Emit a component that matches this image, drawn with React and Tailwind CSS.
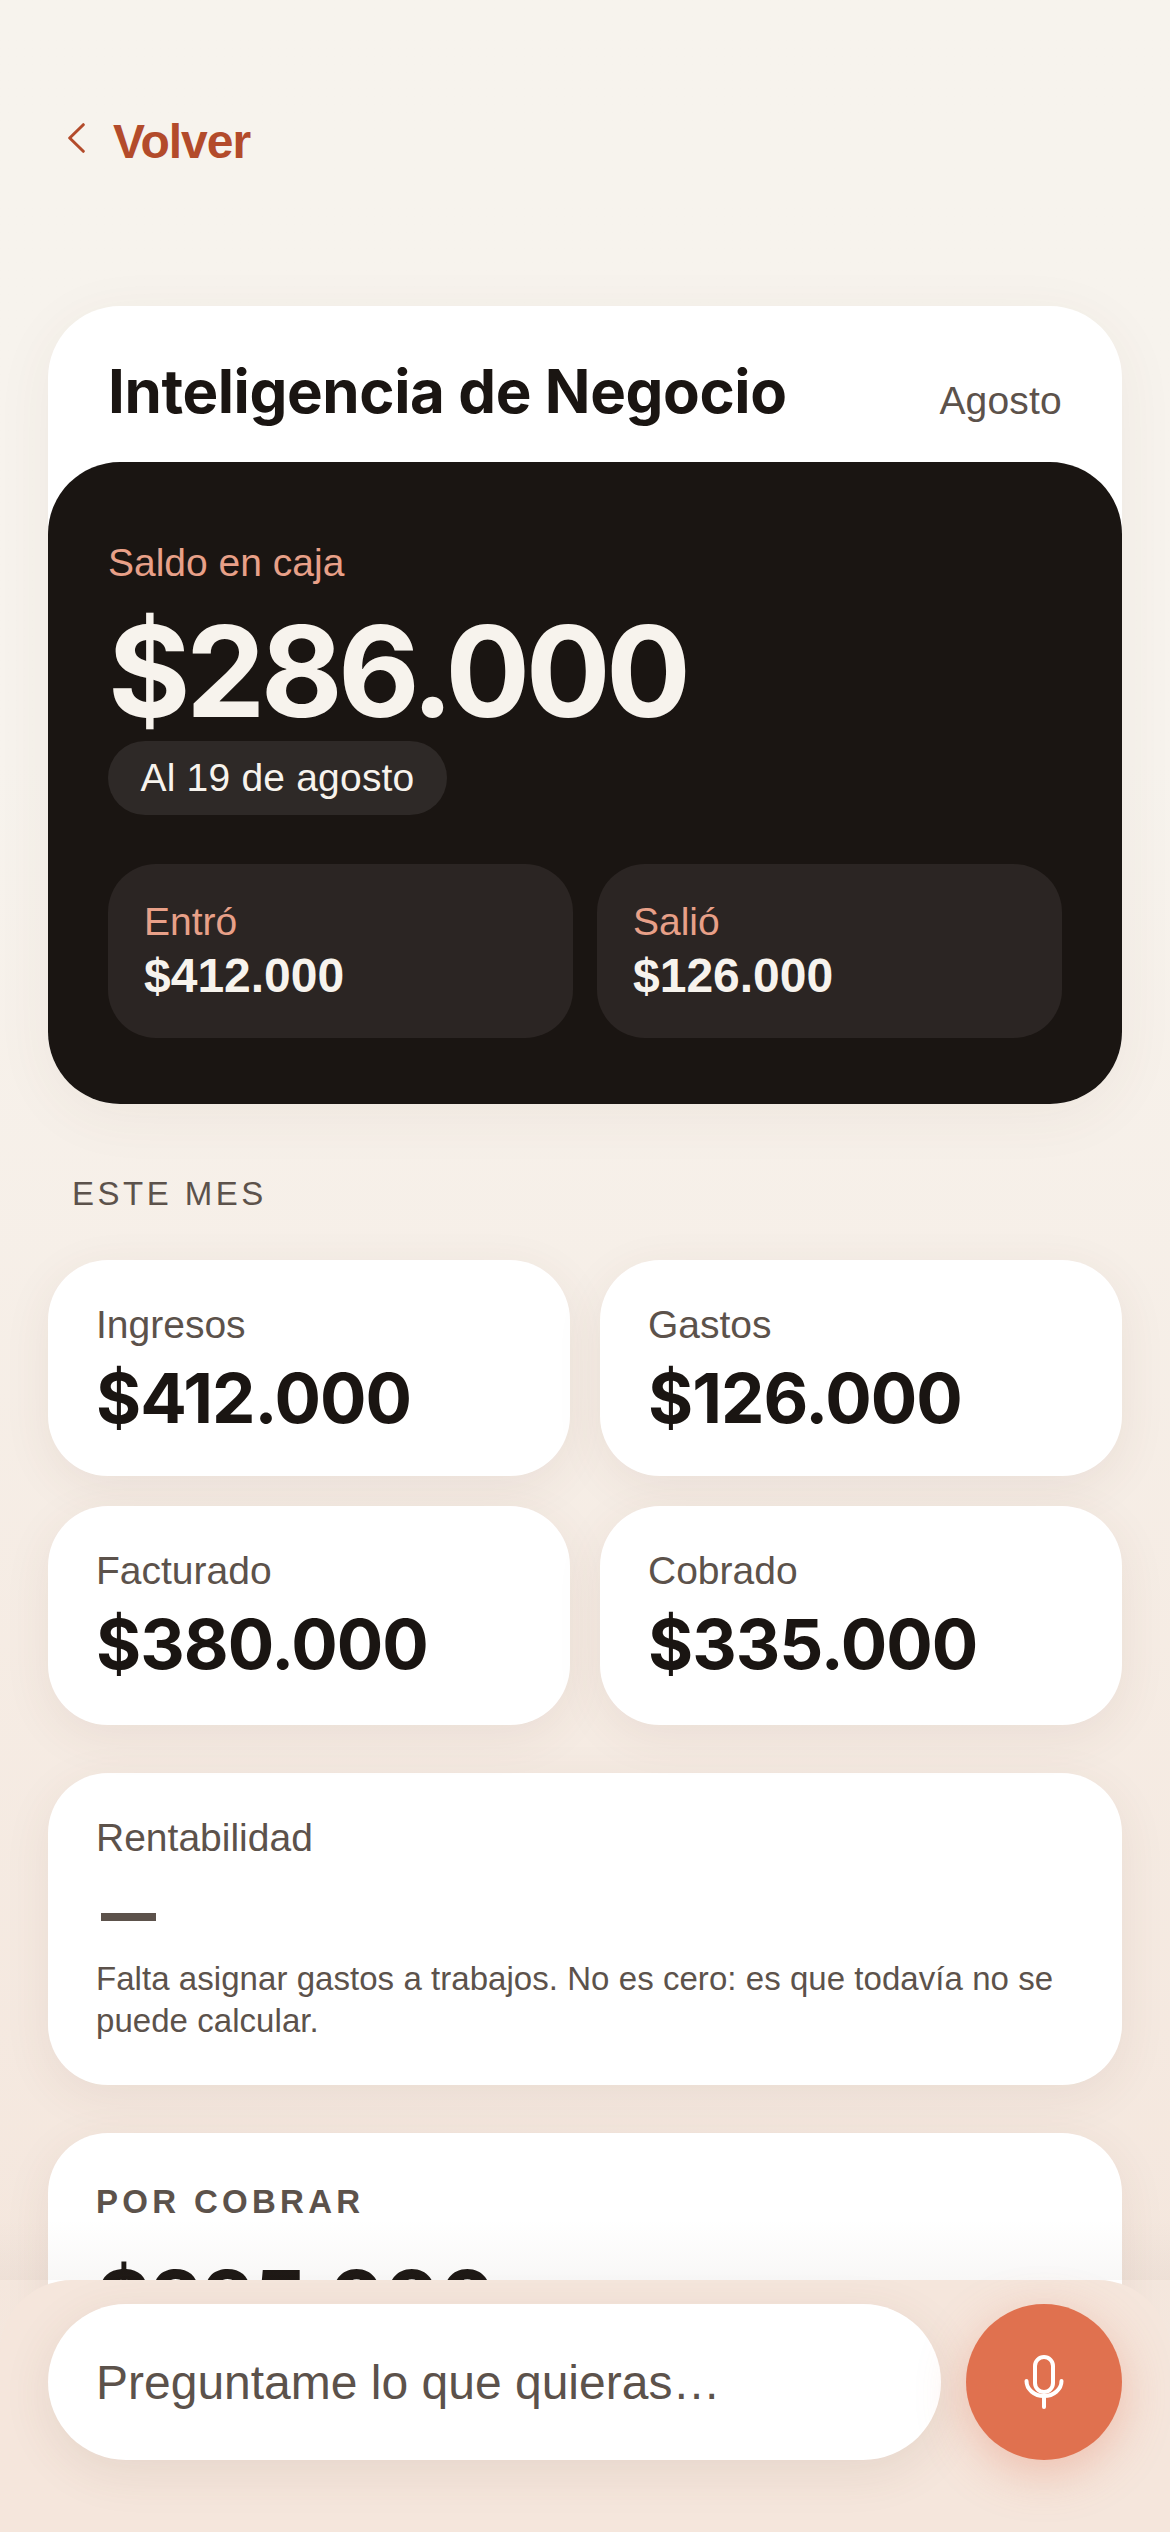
import React from "react";

const sans = "font-['Liberation_Sans',Arial,sans-serif]";
const display = "font-['Inter',sans-serif]";

function MonthCard({ label, value, className = "" }) {
  return (
    <div className={`bg-white rounded-[60px] px-[48px] pt-[41px] shadow-[0_12px_48px_rgba(100,70,50,0.08)] ${className}`}>
      <div className="text-[39px] leading-[48px] text-[#5c524b]">{label}</div>
      <div className={`${display} font-bold text-[69px] leading-[84px] mt-[7px] text-[#1a1512] tracking-[-1px]`}>{value}</div>
    </div>
  );
}

function FlowCard({ label, value }) {
  return (
    <div className="flex-1 h-[174px] rounded-[48px] bg-[#2b2523] pl-[36px] pt-[34px]">
      <div className="text-[39px] leading-[48px] text-[#e8a088]">{label}</div>
      <div className="mt-[2px] text-[48px] leading-[56px] font-bold text-[#f7f3ed]">{value}</div>
    </div>
  );
}

export default function App() {
  return (
    <div className={`${sans} relative h-[2532px] w-[1170px] overflow-hidden bg-linear-to-b from-[#f7f3ed] from-30% to-[#f4e5db]`}>
      <div className="px-[48px]">
        <div className="flex items-center h-[60px] mt-[112px] mb-[-1px] pl-[20px] text-[#b34b2b]">
          <svg width="17" height="30" viewBox="0 0 17 30" fill="none" stroke="currentColor" strokeWidth="3" strokeLinecap="round" strokeLinejoin="round" className="-mt-[8px]">
            <path d="M15.3 1.7 L1.7 15 L15.3 28.3" />
          </svg>
          <span className="ml-[28px] text-[48px] font-bold tracking-[-1px]">Volver</span>
        </div>

        <div className="mt-[135px] bg-white rounded-[72px] shadow-[0_12px_60px_rgba(100,70,50,0.06)]">
          <div className="h-[156px] px-[60px] flex items-start justify-between">
            <div className={`${display} mt-[49px] font-bold text-[60px] leading-[72px] tracking-[-0.4px] text-[#1a1512]`}>Inteligencia de Negocio</div>
            <div className="mt-[71px] text-[39px] leading-[48px] tracking-[0.2px] text-[#5c524b]">Agosto</div>
          </div>
          <div className="bg-[#1a1512] rounded-[72px] h-[642px] px-[60px] pt-[77px]">
            <div className="text-[39px] leading-[48px] text-[#e8a088]">Saldo en caja</div>
            <div className={`${display} font-bold text-[126px] leading-[150px] mt-[9px] text-[#f7f3ed] tracking-[-4.6px]`}>$286.000</div>
            <div className="mt-[-5px] w-[339px] h-[74px] rounded-full bg-[#2e2927] flex items-center justify-center text-[39px] tracking-[0.2px] text-[#f7f3ed]">Al 19 de agosto</div>
            <div className="flex gap-[24px] mt-[49px]">
              <FlowCard label="Entró" value="$412.000" />
              <FlowCard label="Salió" value="$126.000" />
            </div>
          </div>
        </div>

        <div className="mt-[70px] ml-[24px] text-[33px] leading-[40px] tracking-[3.5px] text-[#5c524b]">ESTE MES</div>

        <div className="grid grid-cols-2 gap-x-[30px] mt-[46px]">
          <MonthCard label="Ingresos" value="$412.000" className="h-[216px]" />
          <MonthCard label="Gastos" value="$126.000" className="h-[216px]" />
          <MonthCard label="Facturado" value="$380.000" className="h-[219px] mt-[30px]" />
          <MonthCard label="Cobrado" value="$335.000" className="h-[219px] mt-[30px]" />
        </div>

        <div className="mt-[48px] h-[312px] bg-white rounded-[60px] px-[48px] pt-[41px] shadow-[0_12px_48px_rgba(100,70,50,0.08)]">
          <div className="text-[39px] leading-[48px] text-[#5c524b]">Rentabilidad</div>
          <div className="mt-[51px] ml-[5px] w-[55px] h-[8px] bg-[#5c524b]"></div>
          <div className="mt-[37px] text-[33px] leading-[42px] tracking-[0.05px] text-[#5c524b]">Falta asignar gastos a trabajos. No es cero: es que todavía no se puede calcular.</div>
        </div>

        <div className="mt-[48px] h-[400px] bg-white rounded-[60px] px-[48px] pt-[49px] shadow-[0_12px_48px_rgba(100,70,50,0.08)]">
          <div className="text-[33px] leading-[40px] font-bold tracking-[4.3px] text-[#5c524b]">POR COBRAR</div>
          <div className={`${display} font-bold text-[84px] leading-[100px] mt-[29px] text-[#1a1512] tracking-[-1.2px]`}>$225.000</div>
        </div>
      </div>

      <div className="absolute left-0 right-0 top-[2220px] h-[60px] bg-linear-to-b from-transparent to-[rgba(120,100,90,0.05)]"></div>

      <div className="absolute left-0 right-0 top-[2280px] bottom-0 rounded-t-[72px] bg-[#f5e6dc] px-[48px] pt-[24px] flex gap-[25px] items-start">
        <div className="flex-1 h-[156px] rounded-full bg-white pl-[48px] pt-[2px] flex items-center text-[48px] text-[#5c524b] shadow-[0_12px_48px_rgba(100,70,50,0.1)]">Preguntame lo que quieras…</div>
        <div className="w-[156px] h-[156px] rounded-full bg-[#e0714f] flex items-center justify-center shadow-[0_12px_48px_rgba(224,113,79,0.35)]">
          <svg width="54" height="54" viewBox="0 0 54 54" fill="none" stroke="#fff" strokeWidth="4" strokeLinecap="round" strokeLinejoin="round">
            <rect x="18" y="2" width="18" height="35" rx="9" />
            <path d="M9.5 26 A17.5 15 0 0 0 44.5 26" />
            <path d="M27 41 V52" />
          </svg>
        </div>
      </div>
    </div>
  );
}
